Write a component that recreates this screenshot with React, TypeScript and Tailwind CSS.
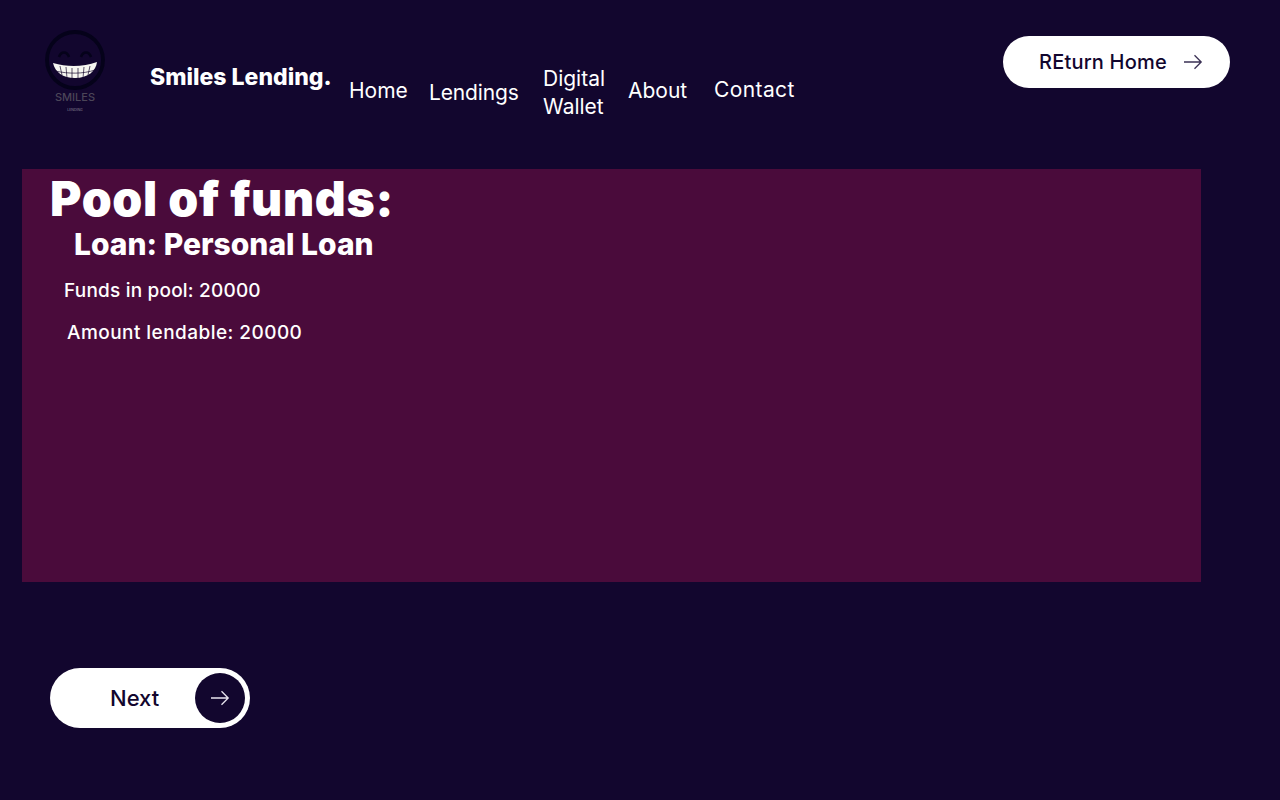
import React from 'react';

const heading = "font-['Inter','Noto_Sans',sans-serif]";

const Arrow = ({ className = '' }: { className?: string }) => (
  <svg viewBox="0 0 20 16" fill="none" stroke="currentColor" strokeWidth="1.3" className={className}>
    <path d="M1 8h17M11.5 1.2 18.2 8l-6.7 6.8" />
  </svg>
);

const Logo = () => (
  <svg viewBox="0 0 70 90" className="w-[70px] h-[90px] shrink-0">
    <circle cx="35" cy="35" r="28" fill="none" stroke="#05021a" strokeWidth="3.8" />
    <path d="M19 32c2-6 8-6 10 0M41 32c2-6 8-6 10 0" fill="none" stroke="#05021a" strokeWidth="2.6" />
    <path d="M13 38c14 4 30 4 44-1-1 9-9 16-22 16-12 0-20-6-22-15z" fill="#f6f6f0" />
    <path d="M20 41l2 9M26 42l1 11M32 43v11M38 43v11M44 42l-1 11M50 41l-2 9M15 46c14 3 28 3 40-1" fill="none" stroke="#15082c" strokeWidth="0.7" />
    <text x="35" y="76" textAnchor="middle" fontSize="11" fontWeight="500" fill="#4b4558" fontFamily="Inter, sans-serif">SMILES</text>
    <text x="35" y="86" textAnchor="middle" fontSize="3.5" fill="#8a8496" fontFamily="Inter, sans-serif">LENDING</text>
  </svg>
);

export default function App() {
  return (
    <div className="min-h-[800px] bg-[#12062e] text-white font-['Inter','Noto_Sans',sans-serif]">
      <header className="flex h-[169px] items-start pl-[40px] pr-[50px]">
        <div className="mt-[25px]">
          <Logo />
        </div>
        <div className={`ml-[40px] mt-[62px] w-[199px] text-[23px] font-extrabold leading-[30px] whitespace-nowrap ${heading}`}>
          Smiles Lending.
        </div>
        <nav className="flex items-start text-[21px] leading-[28px]">
          <a className="mt-[77px] w-[80px]">Home</a>
          <a className="mt-[79px] w-[114px] tracking-[-0.15px]">Lendings</a>
          <a className="mt-[65px] w-[85px]">Digital<br />Wallet</a>
          <a className="mt-[77px] w-[86px]">About</a>
          <a className="mt-[76px] tracking-[0.4px]">Contact</a>
        </nav>
        <button className="ml-auto mt-[36px] flex h-[52px] w-[227px] items-center justify-between rounded-full bg-white pl-[36px] pr-[27px] text-[20px] font-medium tracking-[0.2px] text-[#12062e]">
          REturn Home
          <Arrow className="h-[16px] w-[20px] text-[#3a3054]" />
        </button>
      </header>

      <main className="ml-[22px] h-[413px] w-[1179px] bg-[#4a0b3b] pl-[28px]">
        <h1 className={`text-[48px] font-black leading-[60px] tracking-[0.7px] whitespace-nowrap ${heading}`}>Pool of funds:</h1>
        <h2 className={`ml-[24px] text-[30px] font-extrabold leading-[30px] whitespace-nowrap ${heading}`}>Loan: Personal Loan</h2>
        <p className="ml-[14px] mt-[19px] text-[19px] font-medium leading-[26px] tracking-[0.2px]">Funds in pool: 20000</p>
        <p className="ml-[17px] mt-[16px] text-[19px] font-medium leading-[26px] tracking-[0.45px]">Amount lendable: 20000</p>
      </main>

      <div className="pl-[50px] pt-[86px]">
        <button className="flex h-[60px] w-[200px] items-center justify-between rounded-full bg-white pl-[60px] pr-[5px] text-[22px] font-medium text-[#12062e]">
          Next
          <span className="flex h-[50px] w-[50px] items-center justify-center rounded-full bg-[#12062e]">
            <Arrow className="h-[16px] w-[20px] text-[#e8e4ee]" />
          </span>
        </button>
      </div>
    </div>
  );
}
